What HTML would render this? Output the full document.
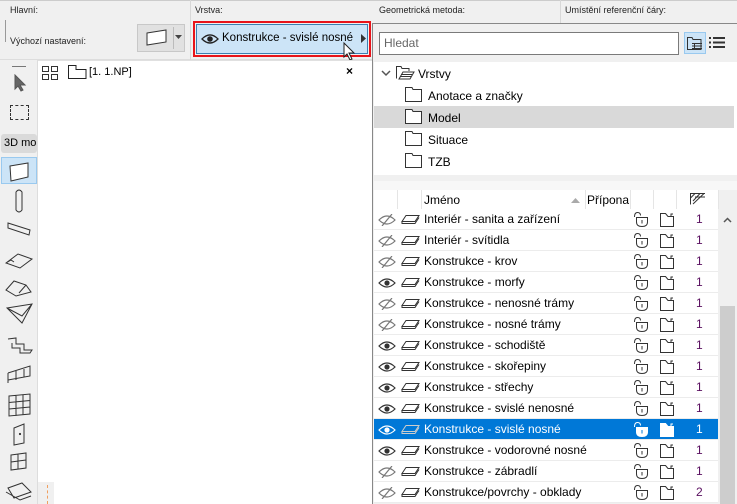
<!DOCTYPE html>
<html><head><meta charset="utf-8"><style>
*{margin:0;padding:0;box-sizing:border-box}
body{width:737px;height:504px;overflow:hidden;background:#f0f0f0;font-family:"Liberation Sans",sans-serif;position:relative;color:#000}
.a{position:absolute}
.lbl{font-size:9px;color:#222}
.row{position:absolute;left:374px;width:344px;height:21px;border-bottom:1px solid #ececec;background:#fff;font-size:12px}
.row .n{position:absolute;left:50px;top:3px;white-space:nowrap}
.row .num{position:absolute;left:322px;top:3px;color:#5a1060}
.row svg{position:absolute}
.sel{background:#0078d7;color:#fff}
.sel .num{color:#fff}
</style></head><body>
<div class="a" style="left:0;top:0;width:737px;height:60px;background:#f0f0f0;border-bottom:1px solid #ddd"></div>
<div class="a" style="left:0;top:0;width:737px;height:1px;background:#ccc"></div>
<div class="a lbl" style="left:10px;top:5px">Hlavní:</div>
<div class="a lbl" style="left:195px;top:5px">Vrstva:</div>
<div class="a lbl" style="left:379px;top:5px">Geometrická metoda:</div>
<div class="a lbl" style="left:565px;top:5px">Umístění referenční čáry:</div>
<div class="a" style="left:190px;top:0;width:1px;height:60px;background:#d8d8d8"></div>
<div class="a" style="left:560px;top:0;width:1px;height:24px;background:#d8d8d8"></div>
<div class="a" style="left:5px;top:20px;width:1px;height:22px;background:#999"></div>
<div class="a lbl" style="left:10px;top:36px">Výchozí nastavení:</div>
<div class="a" style="left:137px;top:24px;width:48px;height:28px;background:#e1e1e1;border:1px solid #c8c8c8"></div>
<svg class="a" style="left:145px;top:29px" width="24" height="18"><path d="M2 4 L21 1 L21 13 L2 16 Z" fill="#fff" stroke="#333" stroke-width="1"/></svg>
<div class="a" style="left:173px;top:27px;width:1px;height:22px;background:#bbb"></div>
<svg class="a" style="left:175px;top:35px" width="8" height="6"><path d="M0 0 L7 0 L3.5 4 Z" fill="#444"/></svg>
<div class="a" style="left:193px;top:21px;width:178px;height:36px;border:2px solid #e8141a"></div>
<div class="a" style="left:196px;top:24px;width:172px;height:30px;background:#cce4f7;border:1px solid #3c7fb1"></div>
<svg class="a" style="left:201px;top:33px" width="18" height="12"><path d="M1 6 Q9 -2 17 6 Q9 14 1 6 Z" fill="none" stroke="#222" stroke-width="1.3"/><circle cx="9" cy="6" r="2.8" fill="#222"/></svg>
<div class="a" style="left:222px;top:32px;font-size:11.5px;white-space:nowrap">Konstrukce - svislé nosné</div>
<svg class="a" style="left:361px;top:34px" width="6" height="9"><path d="M0 0 L5 4.5 L0 9 Z" fill="#333"/></svg>
<svg class="a" style="left:343px;top:42px" width="14" height="20"><path d="M1 1 L1 15 L4 12 L7 18 L9 17 L6 11 L11 11 Z" fill="#fff" stroke="#222" stroke-width="1"/></svg>
<div class="a" style="left:0;top:60px;width:38px;height:444px;background:#f0f0f0;border-right:1px solid #ddd"></div>
<div class="a" style="left:12px;top:66px;width:14px;height:1px;background:#777"></div>
<svg class="a" style="left:13px;top:74px" width="14" height="18"><path d="M2 1 L2 15 L5 12 L8 17 L10 16 L7 11 L12 11 Z" fill="#666" stroke="#555"/></svg>
<div class="a" style="left:10px;top:105px;width:19px;height:15px;border:1px dashed #333"></div>
<div class="a" style="left:1px;top:134px;width:36px;height:19px;background:#dadada;border-radius:3px;font-size:11px;padding:3px 0 0 3px">3D mo</div>
<div class="a" style="left:1px;top:157px;width:36px;height:27px;background:#cce4f7;border:1px solid #99c9ef"></div>
<svg class="a" style="left:0;top:158px" width="38" height="346" fill="none" stroke="#333" stroke-width="1">
<path d="M10 8 L28 5 L28 19 L11 23 Z" fill="#fff"/>
<path d="M16 34 L16 52 Q19 56 22 52 L22 34 Q19 30 16 34 Z"/>
<path d="M8 65 L30 72 L29 77 L8 70 Z"/>
<path d="M6 105 L18 96 L32 101 L20 110 Z M6 105 L11 102 L14 104"/>
<path d="M6 132 L14 123 L26 127 L31 134 L16 138 Z M26 127 L19 135"/>
<path d="M7 150 L32 146 L22 165 Z M7 150 L22 158 L32 146"/>
<path d="M8 181 L16 180 L16 186 L24 186 L24 192 L32 192 L30 195 L20 195 L20 190 L12 190 L12 185"/>
<path d="M8 215 L8 225 M8 215 L30 208 L30 218 L8 222 M16 213 L16 222 M24 211 L24 219"/>
<path d="M9 238 L30 236 L30 256 L9 258 Z M9 244.5 L30 242.5 M9 251 L30 249 M16 237 L16 258 M23 236.5 L23 257"/>
<path d="M14 270 L24 266 L24 285 L14 287 Z"/><circle cx="20" cy="276" r="0.6" fill="#333"/>
<path d="M11 297 L26 295 L26 310 L11 312 Z M11 304 L26 302 M18 296 L18 311"/>
<path d="M8 330 L22 325 L31 334 L14 340 Z M6 334 L20 342 L31 338"/>
</svg>
<div class="a" style="left:38px;top:60px;width:334px;height:444px;background:#fff"></div>
<div class="a" style="left:38px;top:60px;width:334px;height:1px;background:#e0e0e0"></div>
<svg class="a" style="left:41px;top:65px" width="20" height="16" fill="none" stroke="#333"><rect x="1.5" y="1.5" width="6" height="5"/><rect x="10.5" y="1.5" width="6" height="5"/><rect x="1.5" y="9.5" width="6" height="5"/><rect x="10.5" y="9.5" width="6" height="5"/></svg>
<svg class="a" style="left:67px;top:64px" width="22" height="16" fill="none" stroke="#222"><path d="M1.5 14.5 L1.5 1.5 L9 1.5 L9 5.5 L19 5.5 L19 14.5 Z"/></svg>
<div class="a" style="left:89px;top:66px;font-size:11px">[1. 1.NP]</div>
<div class="a" style="left:346px;top:64px;font-size:12px;font-weight:bold">×</div>
<div class="a" style="left:38px;top:482px;width:16px;height:22px;background:#f0f0f0"></div>
<div class="a" style="left:47px;top:485px;width:0;height:19px;border-left:1px dashed #f0a060"></div>
<div class="a" style="left:372px;top:23px;width:365px;height:481px;background:#f0f0f0;border-left:1px solid #888;border-top:1px solid #888"></div>
<div class="a" style="left:379px;top:32px;width:300px;height:23px;background:#fff;border:1px solid #7a7a7a;font-size:12px;color:#666;padding:3px 0 0 4px">Hledat</div>
<div class="a" style="left:684px;top:32px;width:22px;height:22px;background:#cce4f7;border:1px solid #99c9ef"></div>
<svg class="a" style="left:686px;top:35px" width="18" height="16" fill="none" stroke="#333"><path d="M1.5 14.5 L1.5 2.5 L6 2.5 L7 4.5 L15 4.5 L15 14.5 Z"/><path d="M6 8.5 H16 M6 11 H16 M6 13.5 H16 M8.5 8 V15"/></svg>
<svg class="a" style="left:709px;top:37px" width="16" height="11" fill="#333"><rect x="0" y="0" width="2" height="2"/><rect x="4" y="0" width="12" height="2"/><rect x="0" y="4.5" width="2" height="2"/><rect x="4" y="4.5" width="12" height="2"/><rect x="0" y="9" width="2" height="2"/><rect x="4" y="9" width="12" height="2"/></svg>
<div class="a" style="left:374px;top:62px;width:363px;height:113px;background:#fff"></div>
<svg class="a" style="left:381px;top:69px" width="10" height="8"><path d="M1 2 L5 6 L9 2" fill="none" stroke="#555" stroke-width="1.5"/></svg>
<svg class="a" style="left:395px;top:64px" width="20" height="17" fill="none" stroke="#333"><path d="M1.5 14.5 L1.5 2.5 L6 2.5 L7 4.5 L14 4.5 L14 7"/><path d="M4 15 L8 8 L19 8 L15 15 Z M5 12.5 H16 M6 10.5 H17"/></svg>
<div class="a" style="left:418px;top:67px;font-size:12px">Vrstvy</div>
<div class="a" style="left:374px;top:106px;width:360px;height:22px;background:#d9d9d9"></div>
<svg class="a" style="left:404px;top:86px" width="20" height="90" fill="#fff" stroke="#333"><path d="M1.5 15.5 L1.5 1.5 L8 1.5 L9 3.5 L17.5 3.5 L17.5 15.5 Z"/><path d="M1.5 37.5 L1.5 23.5 L8 23.5 L9 25.5 L17.5 25.5 L17.5 37.5 Z"/><path d="M1.5 59.5 L1.5 45.5 L8 45.5 L9 47.5 L17.5 47.5 L17.5 59.5 Z"/><path d="M1.5 81.5 L1.5 67.5 L8 67.5 L9 69.5 L17.5 69.5 L17.5 81.5 Z"/></svg>
<div class="a" style="left:428px;top:89px;font-size:12px">Anotace a značky</div>
<div class="a" style="left:428px;top:111px;font-size:12px">Model</div>
<div class="a" style="left:428px;top:133px;font-size:12px">Situace</div>
<div class="a" style="left:428px;top:155px;font-size:12px">TZB</div>
<div class="a" style="left:374px;top:181px;width:363px;height:9px;background:#f7f7f7"></div>
<div class="a" style="left:374px;top:190px;width:344px;height:19px;background:#fff;font-size:12px">
<div class="a" style="left:23px;top:0;width:1px;height:19px;background:#e5e5e5"></div>
<div class="a" style="left:47px;top:0;width:1px;height:19px;background:#e5e5e5"></div>
<div class="a" style="left:211px;top:0;width:1px;height:19px;background:#e5e5e5"></div>
<div class="a" style="left:256px;top:0;width:1px;height:19px;background:#e5e5e5"></div>
<div class="a" style="left:279px;top:0;width:1px;height:19px;background:#e5e5e5"></div>
<div class="a" style="left:302px;top:0;width:1px;height:19px;background:#e5e5e5"></div>
<div class="a" style="left:344px;top:0;width:1px;height:19px;background:#e5e5e5"></div>
<div class="a" style="left:50px;top:3px">Jméno</div>
<svg class="a" style="left:197px;top:8px" width="9" height="6"><path d="M0 5 L4.5 0 L9 5 Z" fill="#aaa"/></svg>
<div class="a" style="left:213px;top:3px">Přípona</div>
<svg class="a" style="left:316px;top:3px" width="16" height="12" fill="none" stroke="#333"><path d="M0.5 11.5 L0.5 0.5 L15 0.5 M0.5 5 L5 0.5 M3 8 L10 0.5 M3 11 L14 0.5 M5 4 L15 4"/></svg>
</div>
<div class="a" style="left:718px;top:209px;width:19px;height:295px;background:#f0f0f0"></div>
<svg class="a" style="left:723px;top:217px" width="9" height="6"><path d="M1 5 L4.5 1.5 L8 5" fill="none" stroke="#555" stroke-width="1.5"/></svg>
<div class="a" style="left:720px;top:306px;width:15px;height:198px;background:#cdcdcd"></div>
<div id="rows"></div>
<script>
var rows=[["Interiér - sanita a zařízení",0,1],["Interiér - svítidla",0,1],["Konstrukce - krov",0,1],["Konstrukce - morfy",1,1],["Konstrukce - nenosné trámy",0,1],["Konstrukce - nosné trámy",0,1],["Konstrukce - schodiště",1,1],["Konstrukce - skořepiny",1,1],["Konstrukce - střechy",1,1],["Konstrukce - svislé nenosné",1,1],["Konstrukce - svislé nosné",1,1,1],["Konstrukce - vodorovné nosné",1,1],["Konstrukce - zábradlí",0,1],["Konstrukce/povrchy - obklady",0,2]];
var h="";
rows.forEach(function(r,i){
var c=r[3]?"#fff":"#333";var t=209+i*21;
var eye=r[1]?'<path d="M1 6 Q9 -2 17 6 Q9 14 1 6 Z" fill="none" stroke="'+c+'" stroke-width="1.2"/><circle cx="9" cy="6" r="2.6" fill="'+c+'"/>':'<path d="M1 6 Q9 -2 17 6 Q9 14 1 6 Z" fill="none" stroke="#777" stroke-width="1.2"/><path d="M4 12 L14 0" stroke="#777" stroke-width="1.2"/>';
h+='<div class="row'+(r[3]?' sel':'')+'" style="top:'+t+'px">'+
'<svg style="left:4px;top:5px" width="18" height="12">'+eye+'</svg>'+
'<svg style="left:27px;top:5px" width="20" height="12" fill="none" stroke="'+(r[3]?"#ccc":"#333")+'"><path d="M5 1.5 L18 1.5 L14 7.5 L1 7.5 Z M1 7.5 L1 9.5 L14 9.5 L18 3.5"/></svg>'+
'<span class="n">'+r[0]+'</span>'+
'<svg style="left:258px;top:2px" width="17" height="17" fill="'+(r[3]?"#fff":"none")+'" stroke="'+c+'"><path d="M2.5 6 Q2.5 1.5 5.5 1.5 Q8.5 1.5 8.5 4.5" fill="none"/><path d="M4.5 6.5 L15.5 6.5 L15.5 11 Q15.5 15.5 10 15.5 Q4.5 15.5 4.5 11 Z"/><path d="M10 9 L10 12.5" stroke="'+(r[3]?"#0078d7":c)+'"/></svg>'+
'<svg style="left:285px;top:3px" width="16" height="16" fill="'+(r[3]?"#fff":"none")+'" stroke="'+c+'"><path d="M1.5 14.5 L1.5 1.5 L6.5 1.5 L9 4.5 L14.5 4.5 L14.5 14.5 Z"/><path d="M12 4.5 L12 2 L14 2" fill="none"/></svg>'+
'<span class="num">'+r[2]+'</span></div>';
});
document.getElementById("rows").innerHTML=h;
</script>
</body></html>
